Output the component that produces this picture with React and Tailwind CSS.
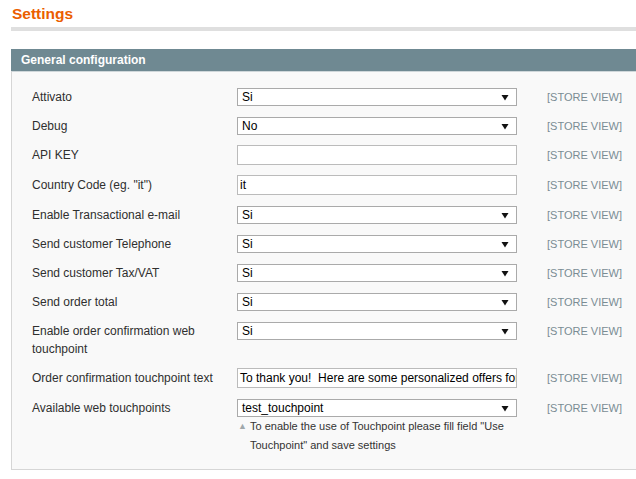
const rows = [
  { label: "Attivato", type: "select", value: "Si" },
  { label: "Debug", type: "select", value: "No" },
  { label: "API KEY", type: "text", value: "" },
  { label: 'Country Code (eg. "it")', type: "text", value: "it" },
  { label: "Enable Transactional e-mail", type: "select", value: "Si" },
  { label: "Send customer Telephone", type: "select", value: "Si" },
  { label: "Send customer Tax/VAT", type: "select", value: "Si" },
  { label: "Send order total", type: "select", value: "Si" },
  { label: "Enable order confirmation web touchpoint", type: "select", value: "Si" },
  {
    label: "Order confirmation touchpoint text",
    type: "text",
    value: "To thank you!  Here are some personalized offers for you",
  },
  {
    label: "Available web touchpoints",
    type: "select",
    value: "test_touchpoint",
    note: 'To enable the use of Touchpoint please fill field "Use Touchpoint" and save settings',
  },
];

function Arrow() {
  return (
    <svg width="8" height="7" viewBox="0 0 8 7" className="shrink-0">
      <path d="M0.5 1h7L4 6.5z" fill="#111" />
    </svg>
  );
}

function Control({ row }) {
  if (row.type === "select") {
    return (
      <div className="mt-px flex h-[18px] w-[280px] items-center justify-between border border-[#aaa] bg-white pl-[4px] pr-[7px] text-[12px] leading-none text-black">
        <span>{row.value}</span>
        <Arrow />
      </div>
    );
  }
  return (
    <div className="flex h-[20px] w-[280px] items-center overflow-hidden whitespace-pre border border-[#bbb] bg-white pl-[2px] text-[12px] leading-none text-black">
      {row.value}
    </div>
  );
}

export default function App() {
  return (
    <div className="w-[636px] h-[479px] overflow-hidden bg-white font-['Liberation_Sans',Arial,sans-serif] text-[12px]">
      {/* header */}
      <div className="pl-[11px]">
        <h3 className="pl-px pt-[5px] text-[15.5px] font-bold leading-[17px] text-[#eb5e00]">Settings</h3>
        <div className="mt-[5px] h-[4px] bg-[#dfdfdf]" />
      </div>

      {/* panel */}
      <div className="ml-[11px] mt-[18px]">
        <div className="flex h-[22px] items-center bg-[#6f8992] pl-[10px] text-[12px] font-bold text-white">
          General configuration
        </div>
        <div className="border-l border-b border-t border-[#d6d6d6] border-t-[#cfd7da] bg-[#f9f9f9] pt-[10px] pb-[9px]">
          {rows.map((row) => (
            <div key={row.label} className="flex items-start pt-[5px] pb-[5px] pl-[20px]">
              <div className="w-[205px] pr-[10px] pt-[1px] leading-[18px] text-[#2f2f2f]">{row.label}</div>
              <div className="w-[310px]">
                <Control row={row} />
                {row.note && (
                  <div className="flex w-[280px] text-[11px] leading-[19px] text-[#333]">
                    <span className="w-[13px] shrink-0 pl-[1px] text-[9px] text-[#a0a8ab]">▲</span>
                    <span>{row.note}</span>
                  </div>
                )}
              </div>
              <div className="pt-[1px] text-[11px] leading-[18px] text-[#7a8c94]">[STORE VIEW]</div>
            </div>
          ))}
        </div>
      </div>
    </div>
  );
}
